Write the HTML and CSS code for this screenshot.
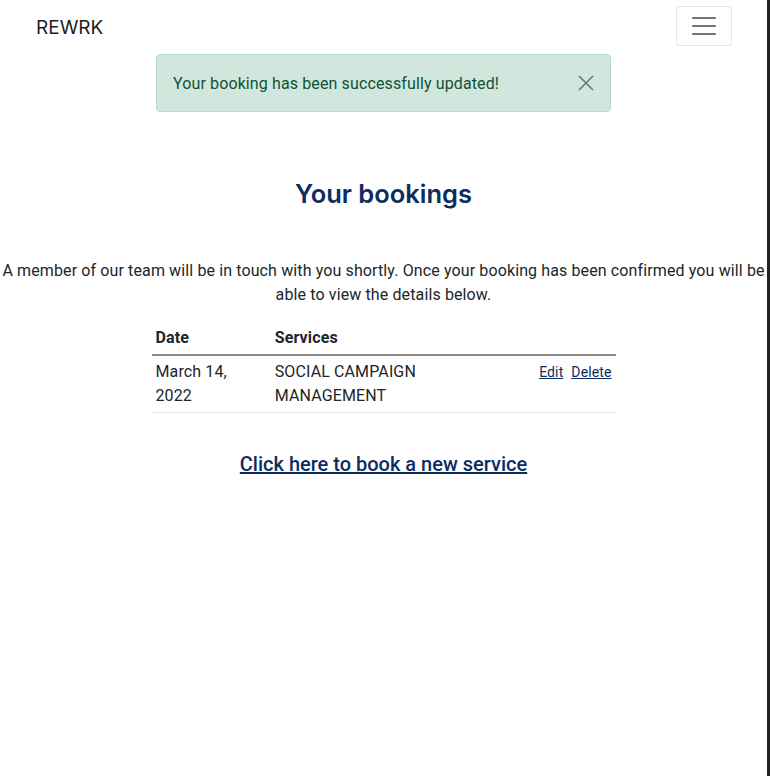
FILE: index.html
```html
<!DOCTYPE html>
<html lang="en">
<head>
<meta charset="utf-8">
<title>REWRK - Your bookings</title>
<link rel="stylesheet" href="styles.css">
</head>
<body>
<div class="page">
  <nav class="navbar">
    <a class="brand" href="#">REWRK</a>
    <button class="toggler" type="button" aria-label="Toggle navigation">
      <svg width="30" height="30" viewBox="0 0 30 30" aria-hidden="true">
        <path d="M4 7h22M4 15h22M4 23h22" stroke="rgba(0,0,0,0.55)" stroke-width="2" stroke-linecap="round"/>
      </svg>
    </button>
  </nav>
  <div class="alert">
    <span>Your booking has been successfully updated!</span>
    <button class="close" type="button" aria-label="Close">
      <svg width="16" height="16" viewBox="0 0 16 16" aria-hidden="true">
        <path d="M1 1L15 15M15 1L1 15" stroke="#6c7a72" stroke-width="1.6"/>
      </svg>
    </button>
  </div>
  <main class="content">
    <h2 class="title">Your bookings</h2>
    <p class="intro">A member of our team will be in touch with you shortly. Once your booking has been confirmed you will be able to view the details below.</p>
    <table class="bookings">
      <thead>
        <tr><th class="c-date">Date</th><th class="c-serv">Services</th><th class="c-act"></th></tr>
      </thead>
      <tbody>
        <tr>
          <td>March 14, 2022</td>
          <td>SOCIAL CAMPAIGN MANAGEMENT</td>
          <td class="actions"><a href="#">Edit</a><a href="#">Delete</a></td>
        </tr>
      </tbody>
    </table>
    <a class="new-link" href="#">Click here to book a new service</a>
  </main>
</div>
</body>
</html>
```
FILE: styles.css
```css
html, body {
  margin: 0;
  padding: 0;
  background: #fff;
}
body {
  font-family: Roboto, "Liberation Sans", sans-serif;
  font-size: 16px;
  line-height: 1.5;
  letter-spacing: 0.12px;
  color: #212529;
}
.page {
  width: 770px;
  min-height: 776px;
  box-sizing: border-box;
  border-right: 3px solid #222;
}
.navbar {
  display: flex;
  justify-content: space-between;
  align-items: center;
  padding: 6px 35px 0 36px;
  height: 40px;
}
.brand {
  font-family: Inter, Roboto, sans-serif;
  font-size: 19px;
  letter-spacing: 0;
  color: rgba(0,0,0,0.9);
  text-decoration: none;
  margin-top: 4px;
}
.toggler {
  width: 56px;
  height: 40px;
  padding: 0;
  background: #fff;
  border: 1px solid rgba(0,0,0,0.1);
  border-radius: 4px;
  display: flex;
  align-items: center;
  justify-content: center;
}
.alert {
  width: 455px;
  box-sizing: border-box;
  margin: 8px auto 0;
  padding: 17px 48px 15px 16px;
  background: #d1e7dd;
  border: 1px solid #badbcc;
  border-radius: 4px;
  color: #0f5132;
  position: relative;
}
.close {
  position: absolute;
  top: 0;
  right: 0;
  background: none;
  border: 0;
  padding: 20px 16px;
  display: flex;
}
.content {
  display: flex;
  flex-direction: column;
  align-items: center;
  text-align: center;
}
.title {
  margin: 66px 0 0;
  font-family: Inter, Roboto, sans-serif;
  font-size: 25.5px;
  font-weight: 600;
  letter-spacing: 0;
  line-height: 31px;
  color: #0c2d5f;
}
.intro {
  margin: 50px 0 0;
}
.bookings {
  margin-top: 15px;
  width: 464px;
  border-collapse: collapse;
  text-align: left;
}
.bookings th, .bookings td {
  padding: 4px;
  vertical-align: top;
}
.bookings th {
  font-weight: 700;
  border-bottom: 2px solid #8a8a8a;
}
.bookings td {
  border-bottom: 1px solid #e6e8ea;
}
.c-date { width: 113px; }
.c-serv { width: 252px; }
.actions {
  font-size: 14px;
  text-align: right;
  white-space: nowrap;
  padding-top: 6px !important;
}
.actions a {
  color: #0c2d5f;
  margin-left: 8px;
}
.new-link {
  margin-top: 36px;
  font-size: 20px;
  font-weight: 500;
  letter-spacing: 0;
  color: #0c2d5f;
}
```
